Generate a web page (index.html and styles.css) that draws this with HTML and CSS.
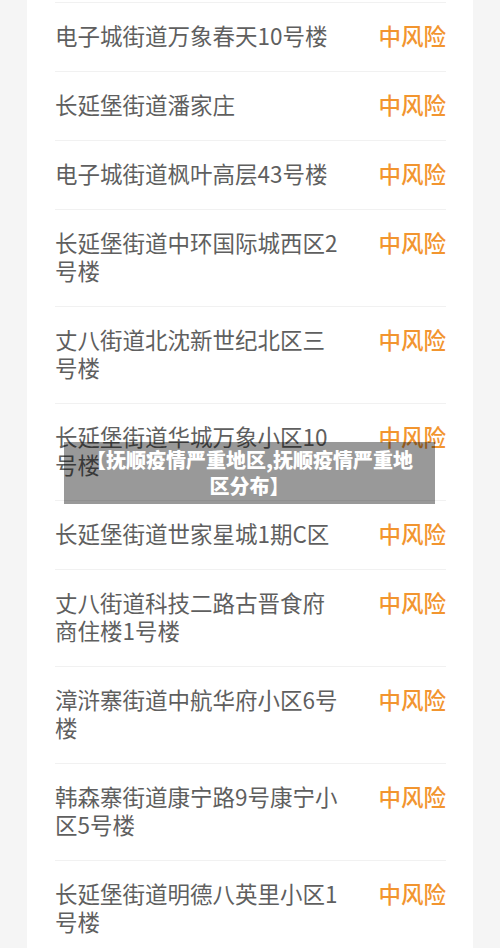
FILE: index.html
```html
<!DOCTYPE html>
<html lang="zh-CN">
<head>
    <meta charset="UTF-8">
    <meta name="viewport" content="width=device-width, initial-scale=1.0">
    <title>抚顺疫情严重地区分布</title>
    <link rel="stylesheet" href="styles.css">
</head>
<body>
    <div class="risk-card">
        <div class="risk-row"><span class="place">电子城街道万象春天10号楼</span><span class="level">中风险</span></div>
        <div class="risk-row"><span class="place">长延堡街道潘家庄</span><span class="level">中风险</span></div>
        <div class="risk-row"><span class="place">电子城街道枫叶高层43号楼</span><span class="level">中风险</span></div>
        <div class="risk-row"><span class="place">长延堡街道中环国际城西区2号楼</span><span class="level">中风险</span></div>
        <div class="risk-row"><span class="place">丈八街道北沈新世纪北区三号楼</span><span class="level">中风险</span></div>
        <div class="risk-row"><span class="place">长延堡街道华城万象小区10号楼</span><span class="level">中风险</span></div>
        <div class="risk-row"><span class="place">长延堡街道世家星城1期C区</span><span class="level">中风险</span></div>
        <div class="risk-row"><span class="place">丈八街道科技二路古晋食府商住楼1号楼</span><span class="level">中风险</span></div>
        <div class="risk-row"><span class="place">漳浒寨街道中航华府小区6号楼</span><span class="level">中风险</span></div>
        <div class="risk-row"><span class="place">韩森寨街道康宁路9号康宁小区5号楼</span><span class="level">中风险</span></div>
        <div class="risk-row"><span class="place">长延堡街道明德八英里小区1号楼</span><span class="level">中风险</span></div>
    </div>

    <div class="title-banner">【抚顺疫情严重地区,抚顺疫情严重地区分布】</div>
</body>
</html>
```

FILE: styles.css
```css
html, body {
    margin: 0;
    padding: 0;
}
body {
    background-color: #f5f5f5;
    font-family: "Noto Sans CJK SC", "Noto Sans", sans-serif;
    height: 948px;
    overflow: hidden;
    position: relative;
}
.risk-card {
    width: 446px;
    margin-left: 27px;
    padding: 2px 27px 0 28px;
    box-sizing: border-box;
    background-color: #fff;
}
.risk-row {
    display: flex;
    justify-content: space-between;
    align-items: flex-start;
    padding: 18px 0 22px;
    border-top: 1px solid #f1f1f1;
    font-size: 22.5px;
    line-height: 28px;
}
.place {
    width: 290px;
    color: #5f5f5f;
}
.level {
    flex: none;
    color: #f2952f;
    font-weight: 500;
}
.title-banner {
    position: absolute;
    top: 442px;
    left: 64px;
    width: 371px;
    box-sizing: border-box;
    padding: 5px 16px;
    background-color: rgba(0, 0, 0, 0.4);
    color: #fff;
    font-size: 20px;
    font-weight: 900;
    line-height: 26px;
    text-align: center;
}
```
